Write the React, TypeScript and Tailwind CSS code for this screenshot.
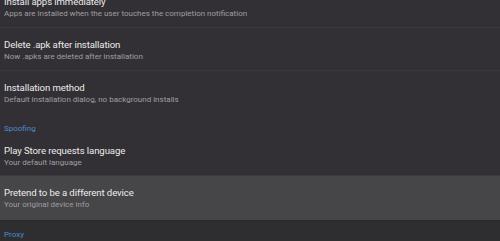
import React from 'react';

type Item = { title: string; summary: string; active?: boolean; divider?: boolean; pad?: string };

const Pref = ({ title, summary, active, divider, pad }: Item) => (
  <div className={`${active ? 'bg-[#464547]' : ''} ${divider ? 'border-b border-[#3b393d]' : ''}`}>
    <div className={`px-[4px] ${pad ?? 'pt-[10px] pb-[8px]'}`}>
      <div className="text-[9.6px] leading-[13px] tracking-[-0.1px] text-[#ececec]">{title}</div>
      <div className="text-[8px] leading-[11px] text-[#a09ea2]">{summary}</div>
    </div>
  </div>
);

const Category = ({ label, className }: { label: string; className?: string }) => (
  <div className={`px-[4px] text-[8px] leading-[11px] text-[#4c8ccc] ${className ?? ''}`}>{label}</div>
);

export default function App() {
  return (
    <div
      className="w-[500px] h-[241px] overflow-hidden bg-[#323034]"
      style={{ fontFamily: 'Roboto, "Noto Sans", sans-serif' }}
    >
      <div className="-mt-[15px]">
        <Pref title="Install apps immediately" summary="Apps are installed when the user touches the completion notification" divider />
        <Pref title="Delete .apk after installation" summary="Now .apks are deleted after installation" divider />
        <Pref title="Installation method" summary="Default installation dialog, no background installs" />
        <Category label="Spoofing" className="pt-[10px]" />
        <Pref title="Play Store requests language" summary="Your default language" divider pad="pt-[10px] pb-[7px]" />
        <Pref title="Pretend to be a different device" summary="Your original device info" active pad="pt-[10px] pb-[10px]" />
        <div className="border-t border-[#2a292c] bg-[#2e2d30] h-[30px]">
          <Category label="Proxy" className="pt-[8px]" />
        </div>
      </div>
    </div>
  );
}
